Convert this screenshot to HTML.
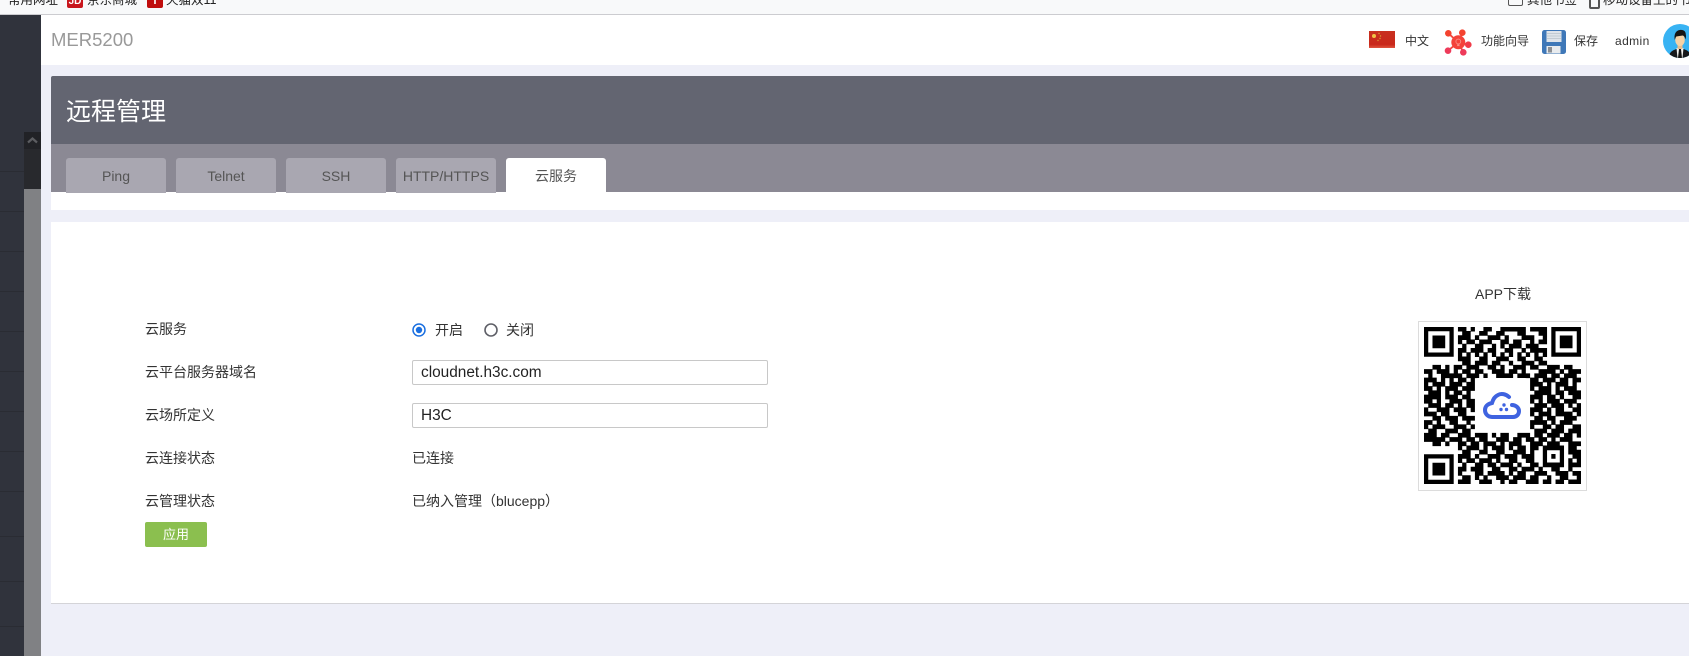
<!DOCTYPE html>
<html lang="zh">
<head>
<meta charset="utf-8">
<title>远程管理</title>
<style>
html,body{margin:0;padding:0;width:1689px;height:656px;overflow:hidden;background:#eeeff8;font-family:"Liberation Sans","Noto Sans CJK SC",sans-serif;color:#333}
.a{position:absolute}
.t{position:absolute;white-space:nowrap;line-height:20px;font-size:14px}
#top{left:0;top:0;width:1689px;height:14px;background:#f8f9fa;border-bottom:1px solid #ccccd0;overflow:hidden}
#top .t{font-size:12.5px;color:#222;top:-10px}
.tab{position:absolute;top:158px;width:100px;height:35px;border-radius:3px 3px 0 0;background:#a9a7b1;color:#555;font-size:14px;line-height:36px;text-align:center;box-sizing:border-box}
.inp{position:absolute;left:412px;width:356px;height:25px;box-sizing:border-box;border:1px solid #c8c8c8;border-radius:2px;background:#fff;padding-left:8px;font-size:15.4px;line-height:23px;color:#222}
.h{font-size:12px;color:#333}
.sep{position:absolute;left:0;width:24px;height:1px;background:#2a2c33}
</style>
</head>
<body>
<div id="top" class="a">
  <div class="t" style="left:8px">常用网址</div>
  <div class="a" style="left:67px;top:-8px;width:16px;height:16px;background:#c8161d;border-radius:2px;color:#fff;font-size:10px;line-height:19px;text-align:center;font-weight:bold">JD</div>
  <div class="t" style="left:87px">京东商城</div>
  <div class="a" style="left:147px;top:-8px;width:16px;height:16px;background:#c00d0d;border-radius:2px;color:#fff;font-size:11px;line-height:19px;text-align:center;font-weight:bold">T</div>
  <div class="t" style="left:166px">天猫双11</div>
  <div class="a" style="left:1508px;top:-6px;width:13px;height:10px;border:1px solid #555;border-radius:2px"></div>
  <div class="t" style="left:1527px">其他书签</div>
  <div class="a" style="left:1589px;top:-6px;width:7px;height:11px;border:2px solid #555;border-radius:2px"></div>
  <div class="t" style="left:1603px">移动设备上的书签</div>
</div>

<!-- sidebar -->
<div class="a" style="left:0;top:15px;width:41px;height:641px;background:#30333c"></div>
<div class="sep" style="top:171px"></div>
<div class="sep" style="top:211px"></div>
<div class="sep" style="top:251px"></div>
<div class="sep" style="top:291px"></div>
<div class="sep" style="top:331px"></div>
<div class="sep" style="top:371px"></div>
<div class="sep" style="top:411px"></div>
<div class="sep" style="top:451px"></div>
<div class="sep" style="top:491px"></div>
<div class="sep" style="top:536px"></div>
<div class="sep" style="top:581px"></div>
<div class="sep" style="top:626px"></div>
<div class="a" style="left:24px;top:132px;width:17px;height:57px;background:#28292d"></div>
<div class="a" style="left:24px;top:132px;width:17px;height:17px;background:#212226"></div>
<svg class="a" style="left:24px;top:132px" width="17" height="17"><path d="M4 10.5L8.5 6.5L13 10.5" fill="none" stroke="#5c5d61" stroke-width="2.2"/></svg>
<div class="a" style="left:24px;top:189px;width:17px;height:467px;background:#808184"></div>

<!-- header -->
<div class="a" style="left:41px;top:15px;width:1648px;height:50px;background:#fff"></div>
<div class="t" style="left:51px;top:30px;font-size:18.5px;color:#999">MER5200</div>

<svg class="a" style="left:1369px;top:31px" width="26" height="17"><defs><linearGradient id="fl" x1="0" y1="0" x2="0" y2="1"><stop offset="0" stop-color="#c8301f"/><stop offset=".8" stop-color="#c9281b"/><stop offset="1" stop-color="#e0553f"/></linearGradient></defs><rect width="26" height="17" fill="url(#fl)"/><circle cx="5" cy="5" r="2" fill="#f0c347"/><circle cx="10" cy="2.5" r=".7" fill="#d99a35"/><circle cx="11.5" cy="5" r=".7" fill="#d99a35"/><circle cx="11" cy="7.5" r=".7" fill="#d99a35"/><circle cx="9" cy="9.5" r=".7" fill="#d99a35"/></svg>
<div class="t h" style="left:1405px;top:31px">中文</div>

<svg class="a" style="left:1444px;top:28px" width="30" height="30"><g stroke="#f2483f" stroke-width="1.8"><path d="M14.3 14.3L4.3 5.3M14.3 14.3L18.3 4.7M14.3 14.3L24.3 16.7M14.3 14.3L19.3 24.3M14.3 14.3L4 22.7"/></g><circle cx="14.3" cy="14.3" r="7" fill="#f4433a"/><circle cx="14.3" cy="13.5" r="2.4" fill="none" stroke="#f98f84" stroke-width=".9"/><rect x="13.1" y="16.3" width="2.4" height="1.8" fill="#f98f84"/><circle cx="4.3" cy="5.3" r="3.3" fill="#f4432f"/><circle cx="18.3" cy="4.7" r="3.3" fill="#f4432f"/><circle cx="24.3" cy="16.7" r="3.300" fill="#f03b48"/><circle cx="19.3" cy="24.3" r="3.300" fill="#ee3b5a"/><circle cx="4" cy="22.7" r="3.300" fill="#ee3b5a"/></svg>
<div class="t h" style="left:1481px;top:31px">功能向导</div>

<svg class="a" style="left:1542px;top:30px" width="24" height="24"><rect width="24" height="24" rx="2.5" fill="#3f78b8"/><rect x="4.5" y="1" width="15" height="11" fill="#dfe4ea"/><path d="M5 3.5h14M5 6h14M5 8.5h14" stroke="#b9c2cc" stroke-width=".8"/><rect x="4.5" y="16" width="14" height="7.5" fill="#e8ebee"/><rect x="6" y="17" width="4" height="5.5" fill="#8c8f93"/></svg>
<div class="t h" style="left:1574px;top:31px">保存</div>
<div class="t h" style="left:1615px;top:31px;font-size:12px;letter-spacing:.4px">admin</div>

<svg class="a" style="left:1663px;top:24px" width="26" height="34"><defs><clipPath id="av"><circle cx="17" cy="17" r="17"/></clipPath></defs><circle cx="17" cy="17" r="17" fill="#38b3f3"/><g clip-path="url(#av)"><path d="M6 34c0-6 3-8 11-10c8 2 11 4 11 10z" fill="#17181a"/><path d="M13.500 24h7l-1 10h-5z" fill="#f3f3f0"/><path d="M16 25h2l1 9h-4z" fill="#111"/><rect x="14.500" y="20" width="5" height="5" fill="#e9bd8c"/><ellipse cx="17" cy="16" rx="4.800" ry="6" fill="#f6d2a6"/><path d="M11.800 16c-1-5 .5-9.500 5-10c4-.5 6 1.500 6 4.500c.5 2 0 3.500-.5 5c-.3-2-.8-3.500-2.500-4c-2.500.5-4.500.5-6.500 1c-.8 1-1 2-1.500 3.500z" fill="#141414"/></g></svg>

<!-- title panel -->
<div class="a" style="left:51px;top:76px;width:1638px;height:68px;background:#636571;border-radius:2px 0 0 0"></div>
<div class="t" style="left:66px;top:97px;font-size:25px;line-height:30px;color:#fff">远程管理</div>
<div class="a" style="left:51px;top:144px;width:1638px;height:48px;background:#8b8994"></div>
<div class="a" style="left:51px;top:192px;width:1638px;height:18px;background:#fff"></div>
<div class="tab" style="left:66px">Ping</div>
<div class="tab" style="left:176px">Telnet</div>
<div class="tab" style="left:286px">SSH</div>
<div class="tab" style="left:396px">HTTP/HTTPS</div>
<div class="tab" style="left:506px;background:#fff;height:36px">云服务</div>

<!-- content -->
<div class="a" style="left:51px;top:222px;width:1638px;height:381px;background:#fff;border-bottom:1px solid #d4d4d8"></div>

<div class="t" style="left:145px;top:319px">云服务</div>
<div class="t" style="left:145px;top:362px">云平台服务器域名</div>
<div class="t" style="left:145px;top:405px">云场所定义</div>
<div class="t" style="left:145px;top:448px">云连接状态</div>
<div class="t" style="left:145px;top:491px">云管理状态</div>

<svg class="a" style="left:412px;top:323px" width="14" height="14"><circle cx="7" cy="7" r="6" fill="#fff" stroke="#1a6fe0" stroke-width="1.500"/><circle cx="7" cy="7" r="3.200" fill="#1a6fe0"/></svg>
<div class="t" style="left:435px;top:320px">开启</div>
<svg class="a" style="left:484px;top:323px" width="14" height="14"><circle cx="7" cy="7" r="6" fill="#fff" stroke="#5f6068" stroke-width="1.600"/></svg>
<div class="t" style="left:506px;top:320px">关闭</div>

<div class="inp" style="top:360px">cloudnet.h3c.com</div>
<div class="inp" style="top:403px">H3C</div>
<div class="t" style="left:412px;top:448px">已连接</div>
<div class="t" style="left:412px;top:491px">已纳入管理（blucepp）</div>

<div class="a" style="left:145px;top:522px;width:62px;height:25px;background:#8bbf4f;border-radius:2px;color:#fff;font-size:13px;line-height:25px;text-align:center">应用</div>

<!-- QR -->
<div class="t" style="left:1475px;top:284px">APP下载</div>
<div class="a" style="left:1418px;top:321px;width:169px;height:170px;box-sizing:border-box;border:1px solid #dcdcdc;background:#fff"></div>
<svg class="a" style="left:1424px;top:327px" width="157" height="157" viewBox="0 0 37 37">
<g fill="none" stroke="#000">
<path d="M.5 .5h6v6h-6zM30.500 .5h6v6h-6zM.5 30.500h6v6h-6z"/>
<path d="M2 2h3v3h-3zM32 2h3v3h-3zM2 32h3v3h-3z" fill="#000" stroke="none"/>
<path stroke-width="1.120" d="
M8 .5h2M11 .5h1M14 .5h2M18 .5h6M25 .5h4
M9 1.500h2M13 1.500h2M17 1.500h2M22 1.500h2M27 1.500h2
M8 2.500h3M12 2.500h1M15 2.500h3M19 2.500h1M23 2.500h3M28 2.500h1
M8 3.500h1M10 3.500h2M13 3.500h3M18 3.500h2M21 3.500h2M25 3.500h1M27 3.500h2
M9 4.500h1M12 4.500h2M16 4.500h1M18 4.500h1M20 4.500h3M24 4.500h3
M8 5.500h2M11 5.500h3M15 5.500h2M19 5.500h2M23 5.500h1M25 5.500h4
M8 6.500h1M10 6.500h1M12 6.500h1M14 6.500h1M16 6.500h1M18 6.500h1M20 6.500h1M22 6.500h1M24 6.500h1M26 6.500h1M28 6.500h1
M8 7.500h3M13 7.500h2M17 7.500h3M22 7.500h2M26 7.500h2
M9 8.500h2M12 8.500h3M16 8.500h2M20 8.500h1M23 8.500h3M27 8.500h2
M2 9.500h2M5 9.500h1M7 9.500h2M10 9.500h3M15 9.500h2M18 9.500h1M21 9.500h3M25 9.500h2M29 9.500h3M33 9.500h2
M0 10.500h2M3 10.500h3M7 10.500h1M9 10.500h2M12 10.500h2M16 10.500h3M20 10.500h2M23 10.500h1M27 10.500h4M32 10.500h1M34 10.500h3
M1 11.500h1M4 11.500h2M6 11.500h3M10 11.500h3M14 11.500h1M17 11.500h4M22 11.500h3M26 11.500h3M30 11.500h2M33 11.500h3
M0 12.500h3M4 12.500h1M6 12.500h1M8 12.500h2M11 12.500h1M25 12.500h2M28 12.500h3M32 12.500h2M35 12.500h2
M0 13.500h1M2 13.500h3M6 13.500h3M10 13.500h2M25 13.500h3M29 13.500h1M31 13.500h3M35 13.500h1
M0 14.500h2M3 14.500h1M5 14.500h3M9 14.500h3M25 14.500h1M27 14.500h3M31 14.500h1M33 14.500h3
M1 15.500h3M5 15.500h1M7 15.500h2M10 15.500h1M26 15.500h4M31 15.500h2M34 15.500h3
M0 16.500h4M5 16.500h3M9 16.500h2M25 16.500h3M29 16.500h2M32 16.500h1M35 16.500h2
M0 17.500h2M3 17.500h1M6 17.500h3M10 17.500h2M25 17.500h1M27 17.500h1M29 17.500h3M33 17.500h3
M1 18.500h3M5 18.500h2M8 18.500h1M10 18.500h2M26 18.500h3M30 18.500h3M34 18.500h1M36 18.500h1
M0 19.500h1M3 19.500h3M7 19.500h3M11 19.500h1M25 19.500h3M29 19.500h1M31 19.500h2M35 19.500h2
M0 20.500h3M4 20.500h2M8 20.500h2M25 20.500h1M27 20.500h3M31 20.500h4M36 20.500h1
M2 21.500h2M5 21.500h3M9 21.500h3M26 21.500h2M29 21.500h2M33 21.500h3
M0 22.500h2M3 22.500h1M6 22.500h2M10 22.500h1M25 22.500h4M30 22.500h1M32 22.500h3
M0 23.500h1M2 23.500h3M7 23.500h3M11 23.500h1M25 23.500h1M28 23.500h2M31 23.500h2M35 23.500h2
M1 24.500h2M5 24.500h3M9 24.500h2M26 24.500h3M30 24.500h3M34 24.500h3
M0 25.500h3M4 25.500h2M8 25.500h3M12 25.500h3M16 25.500h1M18 25.500h2M22 25.500h3M26 25.500h2M29 25.500h3M33 25.500h2M36 25.500h1
M0 26.500h5M6 26.500h3M10 26.500h2M13 26.500h2M17 26.500h3M21 26.500h2M24 26.500h2M27 26.500h2M30 26.500h1M32 26.500h3
M2 27.500h2M5 27.500h1M8 27.500h2M11 27.500h2M14 27.500h3M18 27.500h1M20 27.500h3M25 27.500h3M29 27.500h3M34 27.500h3
M8 28.500h1M10 28.500h3M14 28.500h1M16 28.500h3M20 28.500h1M22 28.500h2M25 28.500h2M28 28.500h5M34 28.500h2
M9 29.500h2M13 29.500h2M17 29.500h2M21 29.500h3M25 29.500h1M28 29.500h1M32 29.500h1M34 29.500h3
M8 30.500h3M12 30.500h1M15 30.500h3M19 30.500h3M23 30.500h3M28 30.500h1M30 30.500h1M32 30.500h1M35 30.500h2
M8 31.500h1M10 31.500h2M13 31.500h3M17 31.500h1M20 31.500h2M24 31.500h2M28 31.500h1M32 31.500h1M34 31.500h1M36 31.500h1
M9 32.500h1M12 32.500h2M15 32.500h2M18 32.500h3M22 32.500h1M25 32.500h2M28 32.500h5M34 32.500h3
M8 33.500h2M11 33.500h3M16 33.500h2M20 33.500h2M23 33.500h3M27 33.500h1M30 33.500h2M34 33.500h1
M8 34.500h1M12 34.500h2M15 34.500h4M20 34.500h1M22 34.500h2M26 34.500h3M31 34.500h3M35 34.500h2
M9 35.500h2M12 35.500h1M14 35.500h1M17 35.500h3M21 35.500h3M25 35.500h2M29 35.500h1M32 35.500h2M36 35.500h1
M8 36.500h3M13 36.500h3M18 36.500h1M20 36.500h2M24 36.500h3M28 36.500h2M31 36.500h2M34 36.500h3"/>
</g>
</svg>
<div class="a" style="left:1475px;top:378px;width:53px;height:54px;background:#fff;border-radius:3px"></div>
<svg class="a" style="left:1482px;top:391px" width="40" height="30"><path d="M27 6C24 3 19 2 16 4C12 6 11 9 10 12C5 13 3 16 3 19C3 23 6 26 10 26H31C35 26 37 23 37 20C37 17 34 14 30 14" fill="none" stroke="#3f63e0" stroke-width="4" stroke-linecap="round"/><circle cx="22" cy="14" r="1.700" fill="#3f63e0"/><circle cx="19" cy="18.500" r="1.700" fill="#3f63e0"/><circle cx="24.500" cy="18.500" r="1.700" fill="#3f63e0"/></svg>
</body>
</html>
